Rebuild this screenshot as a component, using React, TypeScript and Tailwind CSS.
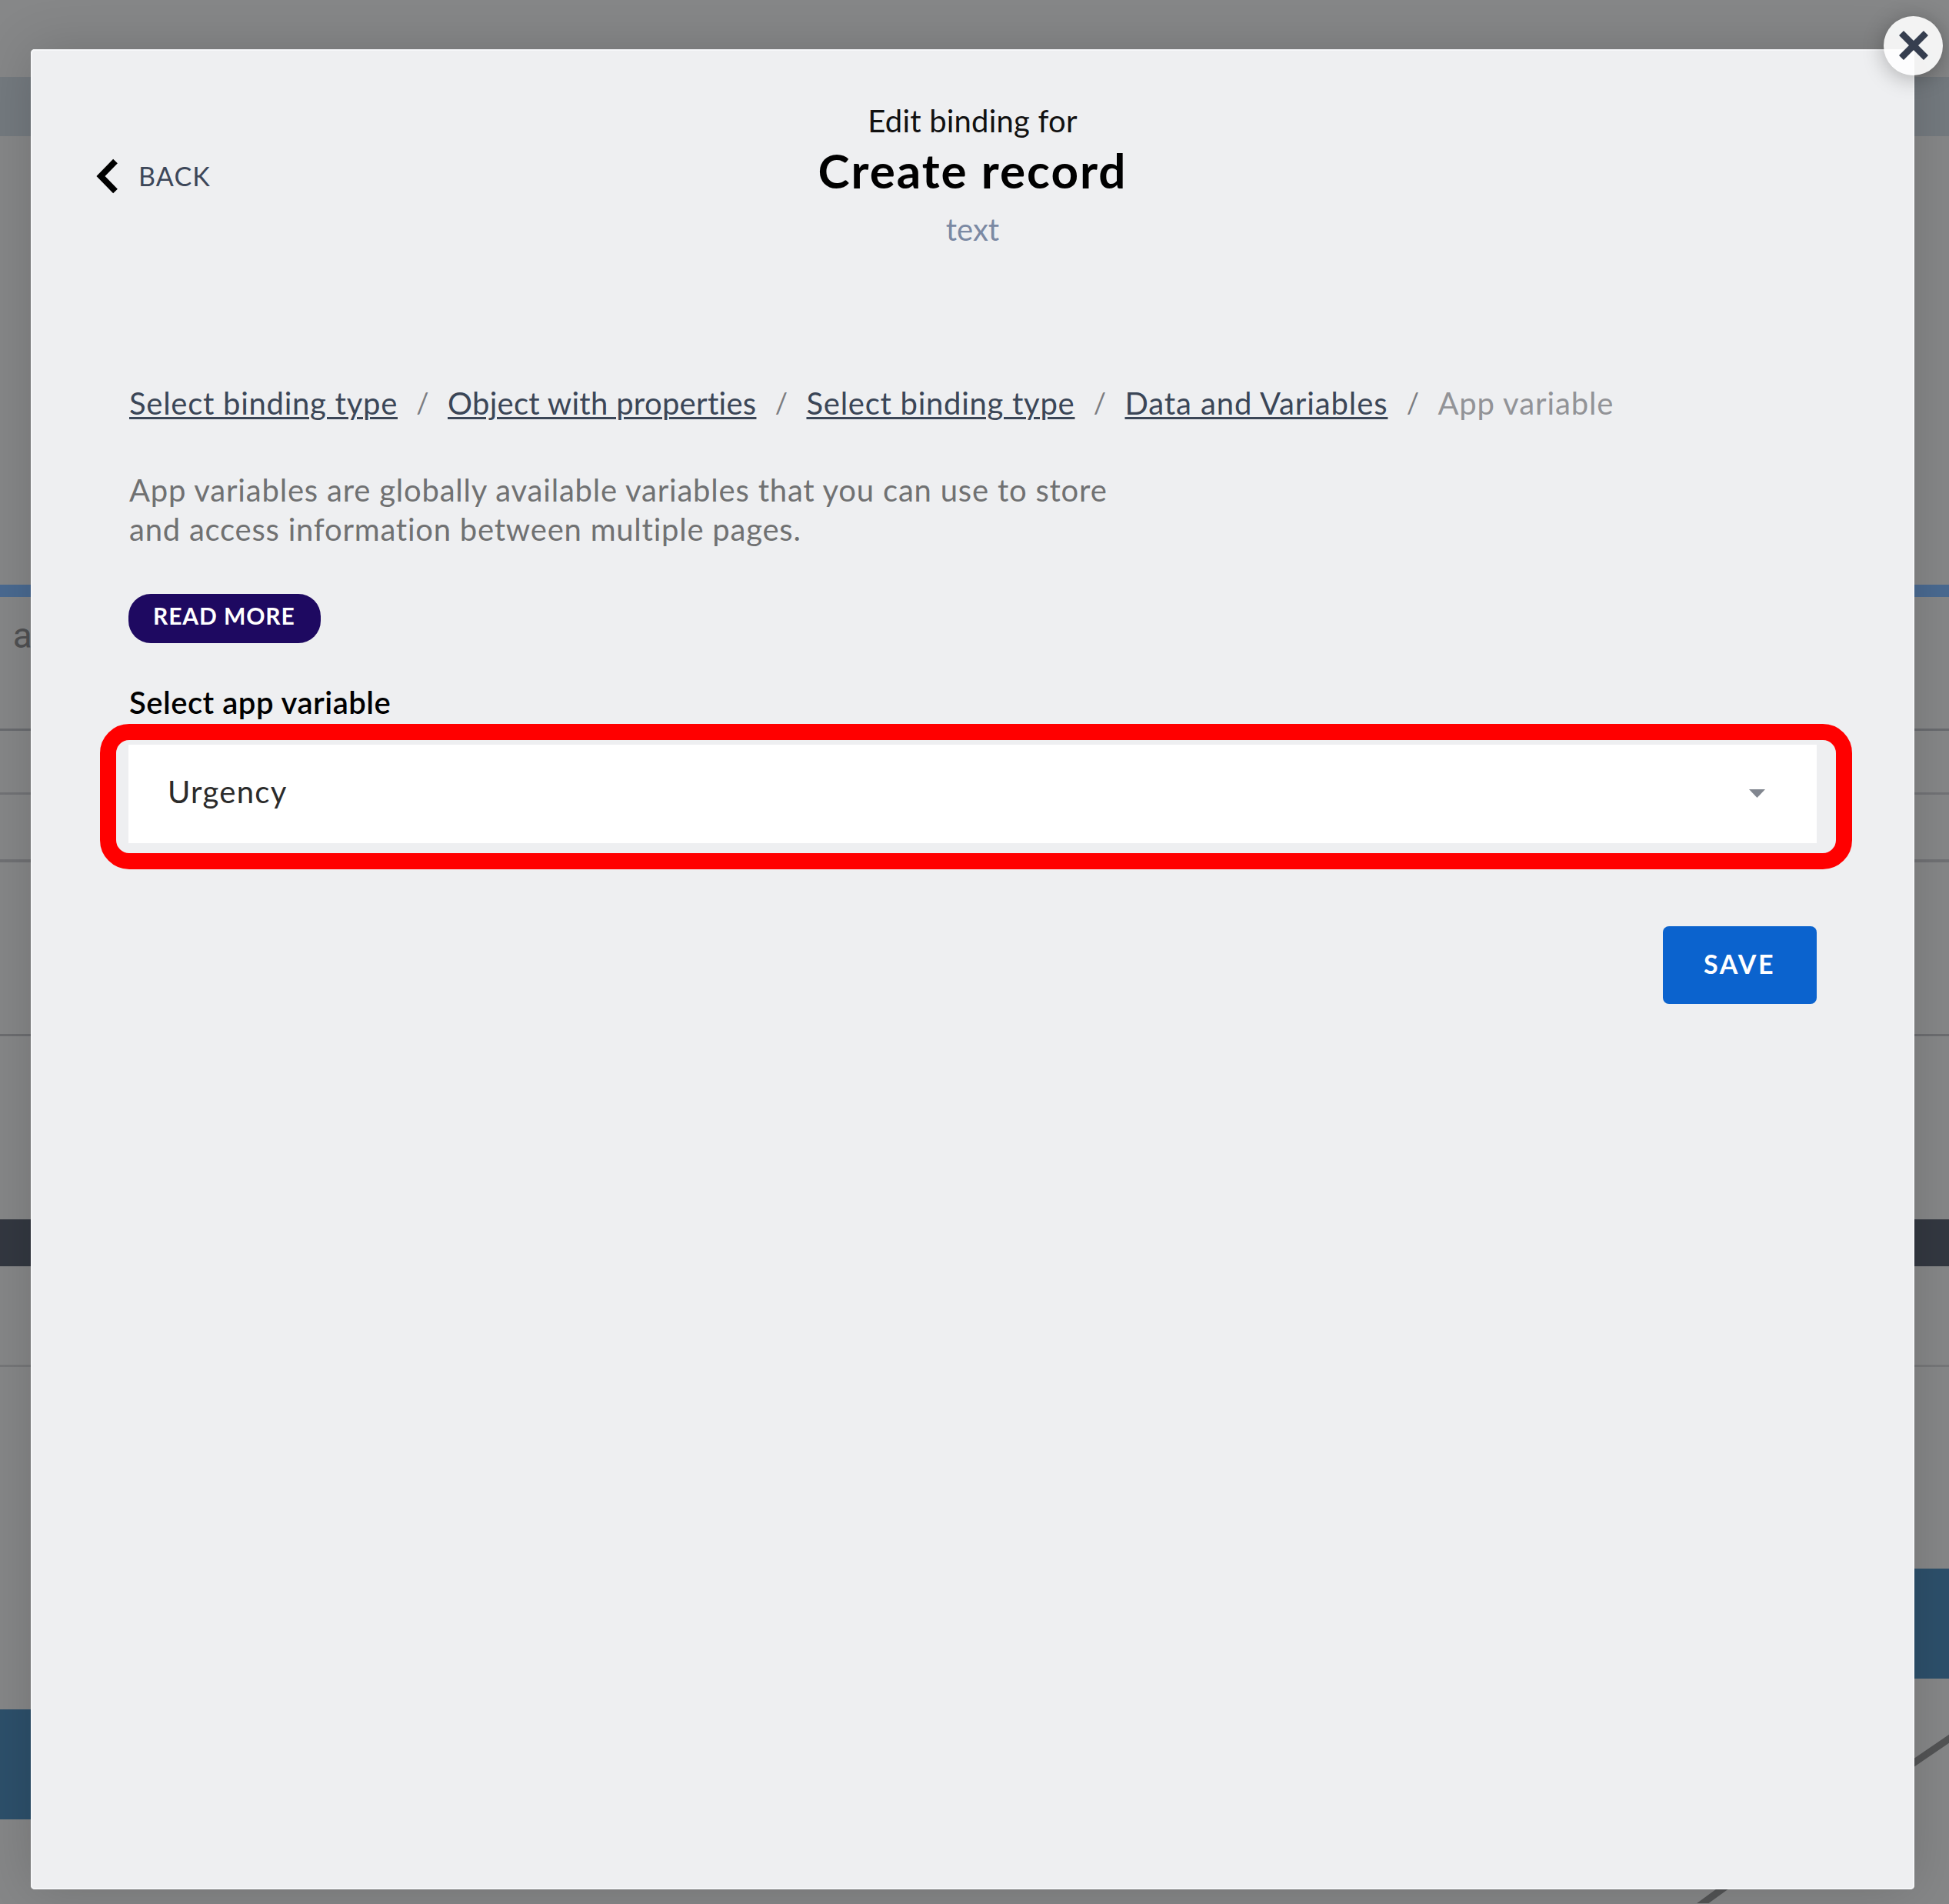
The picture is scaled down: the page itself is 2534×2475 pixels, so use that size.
type Crumb = { label: string; className: string };

const crumbs: Crumb[] = [
  { label: "Select binding type", className: "tracking-[0.73px]" },
  { label: "Object with properties", className: "tracking-[0.3px]" },
  { label: "Select binding type", className: "tracking-[0.73px]" },
  { label: "Data and Variables", className: "tracking-[0.9px]" },
];

/* The dimmed page that stays visible around the dialog. */
function Backdrop() {
  return (
    <div className="flex h-full w-full flex-col bg-[#868788]">
      <div className="h-[100px] shrink-0" />
      <div className="h-[77px] shrink-0 bg-[#747a7f]" />
      <div className="h-[583px] shrink-0" />
      <div className="h-4 shrink-0 bg-[#4a6a91]" />
      <div className="h-[171px] shrink-0 pt-[22px]">
        <div className="-ml-[24px] font-[Roboto] text-[46px] leading-[56px] [word-spacing:5px] whitespace-nowrap text-[#505153]">
          e a
        </div>
      </div>
      <div className="h-[3px] shrink-0 bg-[#696b6f]" />
      <div className="h-[80px] shrink-0" />
      <div className="h-[3px] shrink-0 bg-[#727376]" />
      <div className="h-[84px] shrink-0" />
      <div className="h-[4px] shrink-0 bg-[#707174]" />
      <div className="h-[223px] shrink-0" />
      <div className="h-[3px] shrink-0 bg-[#6c6d70]" />
      <div className="h-[238px] shrink-0" />
      <div className="h-[61px] shrink-0 bg-[#333841]" />
      <div className="h-[128px] shrink-0" />
      <div className="h-[3px] shrink-0 bg-[#767779]" />
      <div className="flex flex-1 justify-between">
        <div className="w-20 pt-[445px]">
          <div className="h-[143px] bg-[#2d506b]" />
        </div>
        <div className="flex w-[360px] flex-col items-end pt-[262px]">
          <div className="h-[143px] w-20 shrink-0 bg-[#2d506b]" />
          <svg className="h-[292px] w-[360px] shrink-0" viewBox="0 0 360 292" fill="none">
            <path
              d="M22 305 L66 273 C170 200 255 150 315 109 L372 70"
              stroke="#535455"
              strokeWidth="9"
            />
          </svg>
        </div>
      </div>
    </div>
  );
}

function CloseButton() {
  return (
    <button
      aria-label="Close"
      className="absolute -top-[43.5px] -right-[37px] flex h-[77px] w-[77px] items-center justify-center rounded-full bg-white/90 shadow-[0_4px_28px_rgba(0,0,0,0.28)]"
    >
      <svg className="h-[38px] w-[38px]" viewBox="0 0 38 38" fill="none">
        <path d="M3 3 L35 35 M35 3 L3 35" stroke="#363e4f" strokeWidth="8.5" />
      </svg>
    </button>
  );
}

function Header() {
  return (
    <header className="-mx-[127px] flex items-start pt-[69px]">
      <div className="flex-1 pl-[85px]">
        <button className="mt-[73px] flex items-center gap-[27px]">
          <svg className="h-[46px] w-[28px]" viewBox="0 0 28 46" fill="none">
            <path d="M25 3.5 L6 23 L25 42.5" stroke="#000000" strokeWidth="8" />
          </svg>
          <span className="text-[34px] leading-[40px] tracking-[1.2px] text-[#3d4759]">BACK</span>
        </button>
      </div>
      <div className="flex flex-col items-center">
        <div className="text-[40px] leading-[48px] tracking-[0.2px] text-[#111111]">Edit binding for</div>
        <h1 className="mt-[10px] text-[62px] leading-[60px] font-bold tracking-[2px] text-black">
          Create record
        </h1>
        <div className="mt-[23px] text-[40px] leading-[48px] text-[#7b89a3]">text</div>
      </div>
      <div className="flex-1 pr-[85px]" />
    </header>
  );
}

function Breadcrumbs() {
  return (
    <nav className="mt-[178px] ml-px flex text-[40px] leading-[48px] whitespace-nowrap">
      {crumbs.map((c, i) => (
        <div key={i} className="flex">
          <a className={`text-[#3b4657] underline decoration-[3px] underline-offset-[3px] ${c.className}`}>
            {c.label}
          </a>
          <span className="w-[65px] pt-px text-center text-[36px] leading-[44px] text-[#7c7d81]">/</span>
        </div>
      ))}
      <span className="tracking-[0.9px] text-[#929397]">App variable</span>
    </nav>
  );
}

function VariableSelect() {
  return (
    <div className="relative mt-[31px] h-[128px] shrink-0 bg-white">
      <div className="flex items-center justify-between pt-[37px] pr-[67px] pl-[51px]">
        <span className="text-[40px] leading-[48px] tracking-[1.3px] text-[#2b2b2b]">Urgency</span>
        <svg className="mt-[5px] h-[11px] w-[21px]" viewBox="0 0 21 11">
          <path d="M0 0 H21 L10.5 11 Z" fill="#81868f" />
        </svg>
      </div>
      <div className="pointer-events-none absolute -top-[27px] -left-[37px] h-[189px] w-[2278px] rounded-[38px] border-[21px] border-[#ff0000]" />
    </div>
  );
}

export default function App() {
  return (
    <div className="relative h-[2475px] w-[2534px] overflow-hidden font-[Lato,sans-serif]">
      <Backdrop />
      <main className="absolute top-[64px] left-[40px] flex h-[2392px] w-[2449px] flex-col rounded-[5px] bg-[#eeeff1] px-[127px] shadow-[0_0_70px_rgba(0,0,0,0.16),inset_0_0_0_2px_#f6f7f9]">
        <CloseButton />
        <Header />
        <Breadcrumbs />
        <div className="mt-16 ml-px text-[40px] leading-[51px] whitespace-nowrap text-[#707172]">
          <div className="tracking-[0.8px]">
            App variables are globally available variables that you can use to store
          </div>
          <div className="tracking-[0.77px]">and access information between multiple pages.</div>
        </div>
        <button className="mt-[58px] h-16 w-[250px] shrink-0 self-start rounded-[29px] bg-[#1e0961] pb-[9px] pl-[32px] text-left text-[30px] leading-[36px] font-bold tracking-[0.9px] whitespace-nowrap text-white">
          READ MORE
        </button>
        <label className="mt-[53px] ml-px text-[40px] leading-[48px] font-semibold tracking-[0.5px] text-black">
          Select app variable
        </label>
        <VariableSelect />
        <button className="mt-[108px] h-[101px] w-[200px] shrink-0 self-end rounded-[8px] bg-[#0b63ce] pb-[4px] pl-[53px] text-left text-[34px] leading-[40px] font-bold tracking-[2.5px] text-white">
          SAVE
        </button>
      </main>
    </div>
  );
}
